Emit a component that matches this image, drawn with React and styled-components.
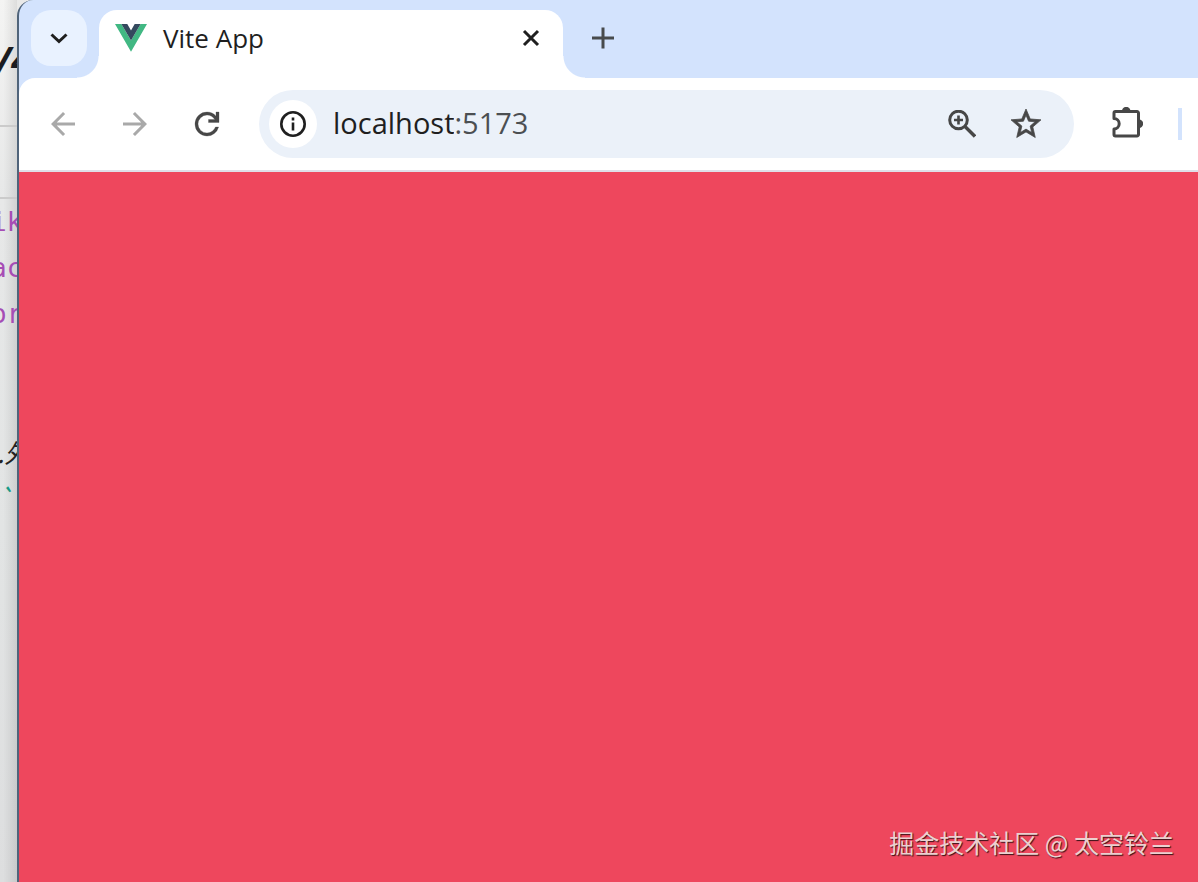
import React, { useState } from "react";
import styled, { createGlobalStyle } from "styled-components";

const Global = createGlobalStyle`
  * { box-sizing: border-box; }
  body { margin: 0; font-family: "Open Sans", "Noto Sans", "Noto Sans CJK SC", sans-serif; }
`;

const Desktop = styled.div`
  display: grid;
  grid-template-columns: 17px minmax(0, 1fr);
  min-height: 100vh;
  background: #e9e9e8;
`;

const Editor = styled.aside`
  overflow: hidden;
  background: linear-gradient(90deg, #00000000 20%, #00000018),
    linear-gradient(#f4f4f3, #e7e8e8 200px, #e2e4e4 60%, #dddedf);
`;

const EditorTitle = styled.div`
  height: 127px;
  margin-left: -4px;
  padding: 36px 0 0;
  border-bottom: 2px solid #cbcbcb;
  color: #1b1c20;
  font: italic bold 36px/48px "Open Sans", sans-serif;
  white-space: nowrap;
`;

const EditorTools = styled.div`
  height: 72px;
  border-bottom: 2px solid #cbcbcb;
`;

const Code = styled.pre`
  margin: 0 0 0 -9px;
  color: #a64db5;
  font: 26px/46px "DejaVu Sans Mono", monospace;
`;

const CodeLine = styled.div`
  height: 46px;
`;

const ProseLine = styled(CodeLine)`
  padding-left: 6px;
  color: ${(p) => p.$color};
  font-family: "Noto Sans CJK SC", sans-serif;
  font-style: italic;
`;

const Browser = styled.div`
  display: flex;
  flex-direction: column;
  min-width: 0;
  overflow: hidden;
  border-left: 2px solid #50647a;
  border-top-left-radius: 16px;
  background: #d3e3fd;
`;

const TabStrip = styled.header`
  display: flex;
  align-items: flex-start;
  height: 78px;
  padding: 10px 12px 0;
`;

const IconButton = styled.button`
  display: grid;
  place-items: center;
  flex: none;
  width: ${(p) => p.$size || 48}px;
  height: ${(p) => p.$size || 48}px;
  padding: 0;
  border: 0;
  border-radius: ${(p) => p.$radius || "50%"};
  background: ${(p) => p.$bg || "transparent"};
  color: ${(p) => p.$color || "#474747"};
  svg { display: block; }
`;

const Tab = styled.div`
  position: relative;
  display: flex;
  align-items: center;
  gap: 16px;
  width: 464px;
  height: 68px;
  margin: 0 12px;
  padding: 0 8px 12px 16px;
  border-radius: 18px 18px 0 0;
  background: #fff;
  color: #1f1f1f;
  &::before, &::after {
    content: "";
    position: absolute;
    bottom: 0;
    width: 22px;
    height: 22px;
  }
  &::before {
    right: 100%;
    background: radial-gradient(circle at 0 0, #fff0 21px, #fff 22px);
  }
  &::after {
    left: 100%;
    background: radial-gradient(circle at 100% 0, #fff0 21px, #fff 22px);
  }
`;

const TabTitle = styled.span`
  flex: 1;
  font-size: 26px;
  line-height: 32px;
`;

const Toolbar = styled.nav`
  display: flex;
  align-items: center;
  gap: 24px;
  height: 94px;
  padding: 0 16px 0 20px;
  border-bottom: 2px solid #dfdfe8;
  border-top-left-radius: 16px;
  background: #fff;
`;

const AddressBar = styled.div`
  display: flex;
  align-items: center;
  flex: 1;
  min-width: 0;
  height: 68px;
  margin-left: 4px;
  padding: 0 24px 0 10px;
  border-radius: 34px;
  background: #ebf1f9;
`;

const Address = styled.label`
  display: flex;
  align-items: center;
  flex: 1;
  min-width: 0;
  padding: 0 0 2px 16px;
  color: #4b4f52;
  font-size: 29px;
  line-height: 40px;
`;

const HostInput = styled.input`
  field-sizing: content;
  min-width: 0;
  padding: 0;
  border: 0;
  outline: 0;
  background: transparent;
  color: #1f1f1f;
  font: inherit;
`;

const Actions = styled.div`
  display: flex;
  gap: 16px;
`;

const Divider = styled.div`
  width: 4px;
  height: 32px;
  background: #d3e3fd;
`;

const Page = styled.main`
  display: flex;
  flex: 1;
  align-items: flex-end;
  justify-content: flex-end;
  padding: 24px;
  background: #ee475d;
`;

const Watermark = styled.p`
  margin: 0;
  color: #ecd0d0;
  font: 25px/32px "Noto Sans CJK SC", sans-serif;
  text-shadow: 1px 1px 1px #3a1218;
`;

const Fill = ({ d, size = 36, outline = 0 }) => (
  <svg
    width={size}
    height={size}
    viewBox="0 0 24 24"
    fill="currentColor"
    stroke="currentColor"
    strokeWidth={outline}
    aria-hidden="true"
  >
    <path d={d} />
  </svg>
);

const Line = ({ size, width = 3, children }) => (
  <svg
    width={size}
    height={size}
    viewBox={`0 0 ${size} ${size}`}
    fill="none"
    stroke="currentColor"
    strokeWidth={width}
    aria-hidden="true"
  >
    {children}
  </svg>
);

const VueLogo = () => (
  <svg width="32" height="28" viewBox="0 0 32 28" aria-hidden="true">
    <path d="M0 0h6.4L16 16.6 25.6 0H32L16 27.7z" fill="#41b883" />
    <path d="M6.4 0h5.9L16 6.4 19.7 0h5.9L16 16.6z" fill="#34495e" />
  </svg>
);

const BACK = "M20 11H7.83l5.59-5.59L12 4l-8 8 8 8 1.41-1.41L7.83 13H20v-2z";
const FORWARD = "M4 11h12.17l-5.59-5.59L12 4l8 8-8 8-1.41-1.41L16.17 13H4v-2z";
const RELOAD =
  "M12 20q-3.35 0-5.675-2.325T4 12q0-3.35 2.325-5.675T12 4q1.725 0 3.3.713T18 6.75V4h2v7h-7V9h4.2q-.8-1.4-2.187-2.2T12 6Q9.5 6 7.75 7.75T6 12q0 2.5 1.75 4.25T12 18q1.925 0 3.475-1.1T17.65 14h2.1q-.7 2.65-2.85 4.325T12 20Z";
const STAR =
  "M22 9.24l-7.19-.62L12 2 9.19 8.63 2 9.24l5.46 4.73L5.82 21 12 17.27 18.18 21l-1.63-7.03L22 9.24zM12 15.4l-3.76 2.27 1-4.28-3.32-2.88 4.38-.38L12 6.1l1.71 4.04 4.38.38-3.32 2.88 1 4.28L12 15.4z";

export default function App() {
  const [host, setHost] = useState("localhost");
  return (
    <>
      <Global />
      <Desktop>
        <Editor>
          <EditorTitle>/4</EditorTitle>
          <EditorTools />
          <Code>
            <CodeLine>ik</CodeLine>
            <CodeLine>ac</CodeLine>
            <CodeLine>or</CodeLine>
            <CodeLine />
            <CodeLine />
            <ProseLine $color="#222">.外</ProseLine>
            <ProseLine $color="#159a86">`</ProseLine>
          </Code>
        </Editor>
        <Browser>
          <TabStrip>
            <IconButton $size={56} $radius="20px" $bg="#e9f2ff" $color="#1f1f1f" aria-label="Search tabs">
              <Line size={20} width={3}>
                <path d="M2.500 6.500l7.500 7 7.500-7" />
              </Line>
            </IconButton>
            <Tab>
              <VueLogo />
              <TabTitle>Vite App</TabTitle>
              <IconButton $color="#1f1f1f" aria-label="Close tab">
                <Line size={20}>
                  <path d="M3 3l14 14M17 3L3 17" />
                </Line>
              </IconButton>
            </Tab>
            <IconButton $size={56} $color="#474a4c" aria-label="New tab">
              <Line size={22}>
                <path d="M11 0.500v21M0 11h22" />
              </Line>
            </IconButton>
          </TabStrip>
          <Toolbar>
            <IconButton $color="#a9a9a9" aria-label="Back"><Fill d={BACK} /></IconButton>
            <IconButton $color="#a9a9a9" aria-label="Forward"><Fill d={FORWARD} /></IconButton>
            <IconButton aria-label="Reload"><Fill d={RELOAD} outline={0.2} /></IconButton>
            <AddressBar>
              <IconButton $bg="#fff" $color="#1f1f1f" aria-label="Site information">
                <Line size={26}>
                  <circle cx="13" cy="13" r="11.7" strokeWidth="2.6" />
                  <path d="M13 11.5v8M13 6.5v3" strokeWidth="2.6" />
                </Line>
              </IconButton>
              <Address>
                <HostInput
                  aria-label="Address"
                  value={host}
                  onChange={(e) => setHost(e.target.value)}
                />
                <span>:5173</span>
              </Address>
              <Actions>
                <IconButton aria-label="Zoom">
                  <Line size={28}>
                    <circle cx="10.5" cy="10" r="8.8" />
                    <path d="M17 16.500l10 10" strokeWidth="3.4" />
                    <path d="M10.500 5.500v9M6 10h9" strokeWidth="2.6" />
                  </Line>
                </IconButton>
                <IconButton aria-label="Bookmark this tab"><Fill d={STAR} outline={0.5} /></IconButton>
              </Actions>
            </AddressBar>
            <IconButton $size={56} aria-label="Extensions">
              <Line size={34}>
                <path
                  d="M6.500 4.500H28a1.500 1.500 0 0 1 1.500 1.500v21.500a1.500 1.500 0 0 1-1.500 1.500H6.500a1.500 1.500 0 0 1-1.500-1.500v-5.500a5.200 5.200 0 0 0 0-10.400V6A1.500 1.500 0 0 1 6.500 4.500z"
                  strokeLinejoin="round"
                />
                <path d="M13 4a4.200 4.200 0 0 1 8.400 0zM30 12.500a4.200 4.200 0 0 1 0 8.400z" fill="currentColor" stroke="none" />
              </Line>
            </IconButton>
            <Divider />
          </Toolbar>
          <Page>
            <Watermark>掘金技术社区 @ 太空铃兰</Watermark>
          </Page>
        </Browser>
      </Desktop>
    </>
  );
}
